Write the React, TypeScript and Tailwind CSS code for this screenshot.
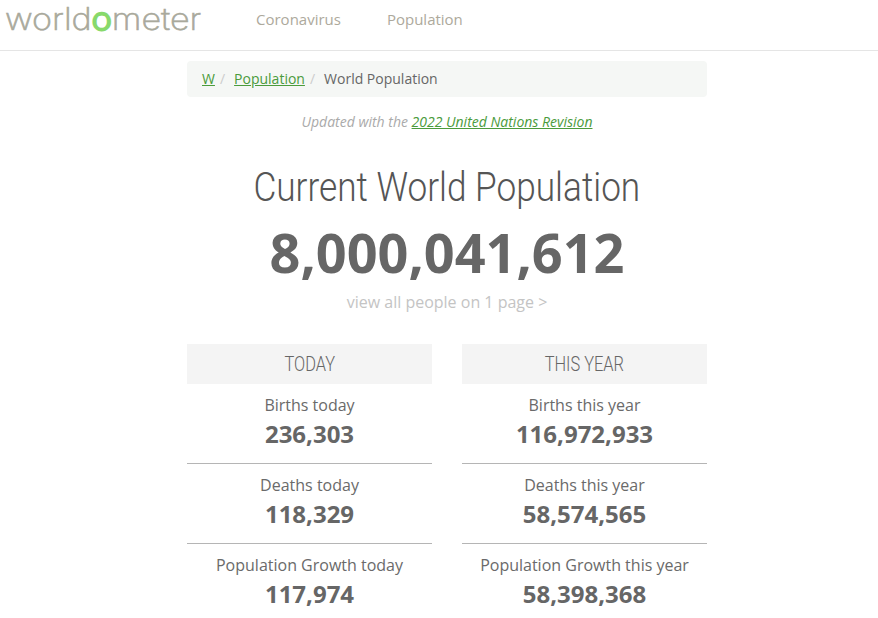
const sans = "font-['Open_Sans',sans-serif]";

function Stat({ label, value, border }: { label: string; value: string; border?: boolean }) {
  return (
    <div className={`flex h-[80px] flex-col items-center pt-[10px] ${border ? "border-b border-[#b5b5b5]" : ""}`}>
      <div className="text-[16px] leading-[22px] text-[#6a6a6a]">{label}</div>
      <div className="mt-[2px] text-[24px] font-bold leading-[32px] text-[#666666]">{value}</div>
    </div>
  );
}

function Column({ title, rows }: { title: string; rows: [string, string][] }) {
  return (
    <div className="w-[245px]">
      <div className="flex h-[40px] items-center justify-center bg-[#f4f4f4]">
        <span className="inline-block scale-x-[0.82] font-['Roboto',sans-serif] text-[20px] font-light text-[#666666]">{title}</span>
      </div>
      {rows.map(([label, value], i) => (
        <Stat key={label} label={label} value={value} border={i < rows.length - 1} />
      ))}
    </div>
  );
}

export default function App() {
  return (
    <div className={`h-[618px] w-[878px] overflow-hidden bg-white ${sans}`}>
      <header className="flex h-[51px] items-start border-b border-[#e5e5e5]">
        <div className="ml-[5px] w-[225px] whitespace-nowrap font-['Inter',sans-serif] text-[31px] font-extralight leading-[38px] text-[#a9a99c]">
          <span className="inline-block origin-left scale-x-[1.1] [-webkit-text-stroke:0.6px_#a9a99c]">
            world<span className="text-[#88d96b] [-webkit-text-stroke:2.4px_#88d96b]">o</span>meter
          </span>
        </div>
        <nav className="mt-[9px] flex gap-[46px] pl-[26px] text-[15px] leading-[20px] text-[#ada99c]">
          <span>Coronavirus</span>
          <span>Population</span>
        </nav>
      </header>

      <main className="ml-[187px] w-[520px]">
        <div className="mt-[10px] flex h-[36px] items-center rounded-[4px] bg-[#f5f7f5] pb-[2px] pl-[15px] text-[14px] text-[#666666]">
          <span className="text-[#4b9b3c] underline">W</span>
          <span className="ml-[5px] text-[#cccccc]">/</span>
          <span className="ml-[9px] text-[#4b9b3c] underline">Population</span>
          <span className="ml-[5px] text-[#cccccc]">/</span>
          <span className="ml-[9px]">World Population</span>
        </div>

        <p className="mt-[15px] text-center text-[14px] italic leading-[20px] text-[#aaaaaa]">
          Updated with the <span className="text-[#4b9b3c] underline">2022 United Nations Revision</span>
        </p>

        <h1 className="mt-[31px] whitespace-nowrap text-center font-['Roboto',sans-serif] text-[40px] font-light leading-[50px] text-[#555555]">
          <span className="inline-block scale-x-[0.88]">Current World Population</span>
        </h1>

        <div className="mt-[9px] text-center text-[54px] font-bold leading-[60px] text-[#666666]">8,000,041,612</div>

        <div className="mt-[9px] text-center text-[16px] leading-[22px] text-[#c4c4c4]">view all people on 1 page &gt;</div>

        <div className="mt-[31px] flex justify-between">
          <Column
            title="TODAY"
            rows={[
              ["Births today", "236,303"],
              ["Deaths today", "118,329"],
              ["Population Growth today", "117,974"],
            ]}
          />
          <Column
            title="THIS YEAR"
            rows={[
              ["Births this year", "116,972,933"],
              ["Deaths this year", "58,574,565"],
              ["Population Growth this year", "58,398,368"],
            ]}
          />
        </div>
      </main>
    </div>
  );
}
